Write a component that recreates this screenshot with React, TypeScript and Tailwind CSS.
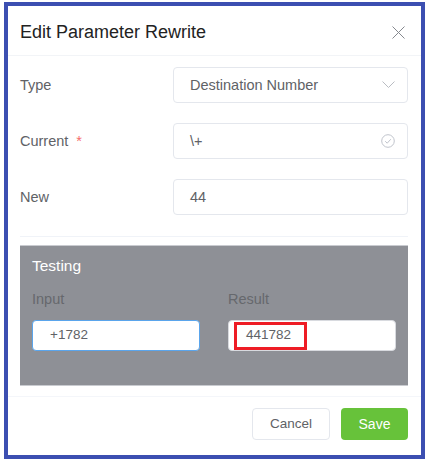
function Row({ label, required, children }: { label: string; required?: boolean; children: React.ReactNode }) {
  return (
    <div className="flex h-[36px] items-center">
      <div className="w-[153px] pt-px text-[14.5px] text-[#606266]">
        {label}
        {required && <span className="ml-[8px] text-[#f56c6c]">*</span>}
      </div>
      {children}
    </div>
  );
}

function Field({ value, children }: { value: string; children?: React.ReactNode }) {
  return (
    <div className="flex h-[36px] w-[235px] items-center justify-between rounded-[4px] border border-[#e4e7ed] bg-white pl-[16px] pr-[12px] text-[14.5px] text-[#606266]">
      <span className="pt-px">{value}</span>
      {children}
    </div>
  );
}

export default function App() {
  return (
    <div className="h-[462px] w-[428px] bg-white pl-[4px] pt-[2px] font-['Liberation_Sans',Arial,sans-serif]">
      <div className="flex h-[457px] w-[421px] flex-col border-4 border-[#3c4fb1] bg-white">
        <div className="flex h-[50px] shrink-0 items-center justify-between border-b border-[#f2f4f7] pl-[12px] pr-[16px] pt-[3px]">
          <span className="text-[18px] text-[#222]">Edit Parameter Rewrite</span>
          <svg width="13" height="13" viewBox="0 0 13 13" fill="none" stroke="#85888e" strokeWidth="1">
            <path d="M0.5 0.5 12.5 12.5M12.5 0.5 0.5 12.5" />
          </svg>
        </div>
        <div className="flex flex-col gap-[20px] pl-[12px] pr-[13px] pt-[11px]">
          <Row label="Type">
            <Field value="Destination Number">
              <svg width="13" height="8" viewBox="0 0 13 8" fill="none" stroke="#b9bcc2" strokeWidth="1">
                <path d="M0.5 0.5 6.5 6.5 12.5 0.5" />
              </svg>
            </Field>
          </Row>
          <Row label="Current" required>
            <Field value="\+">
              <svg width="14" height="14" viewBox="0 0 14 14" fill="none" stroke="#c0c4cc" strokeWidth="1">
                <circle cx="7" cy="7" r="6.3" />
                <path d="M4.2 7.2 6.2 9.2 9.8 5.2" />
              </svg>
            </Field>
          </Row>
          <Row label="New">
            <Field value="44" />
          </Row>
        </div>
        <div className="mx-[12px] mt-[21px] h-px w-[388px] bg-[#f0f3f8]" />
        <div className="ml-[12px] mr-[13px] mt-[8px] h-[141px] border-y border-[#c9cbd0] bg-[#8e9096] px-[12px] pt-[11px]">
          <div className="text-[15.5px] leading-[18px] text-white">Testing</div>
          <div className="mt-[16px] flex">
            <div className="w-[196px]">
              <div className="text-[14.5px] leading-[16px] text-[#66686d]">Input</div>
              <div className="mt-[13px] flex h-[31px] w-[168px] items-center rounded-[4px] border border-[#5aa5ec] bg-white pl-[17px] text-[13.5px] text-[#606266]">
                +1782
              </div>
            </div>
            <div className="w-[168px]">
              <div className="text-[14.5px] leading-[16px] text-[#66686d]">Result</div>
              <div className="relative mt-[13px] flex h-[31px] w-[168px] items-center rounded-[4px] border border-[#d8dadf] bg-white pl-[17px] text-[13.5px] text-[#606266]">
                441782
                <div className="absolute left-[5px] top-[1px] h-[28px] w-[73px] border-[3px] border-[#ee1c25]" />
              </div>
            </div>
          </div>
        </div>
        <div className="mt-[10px] h-px w-full bg-[#f4f6fa]" />
        <div className="flex justify-end gap-[11px] pr-[13px] pt-[11px]">
          <div className="flex h-[32px] w-[78px] items-center justify-center rounded-[4px] border border-[#e4e7ed] bg-white text-[13.5px] text-[#606266]">
            Cancel
          </div>
          <div className="flex h-[32px] w-[67px] items-center justify-center rounded-[4px] bg-[#67c23a] text-[14px] text-white">
            Save
          </div>
        </div>
      </div>
    </div>
  );
}
